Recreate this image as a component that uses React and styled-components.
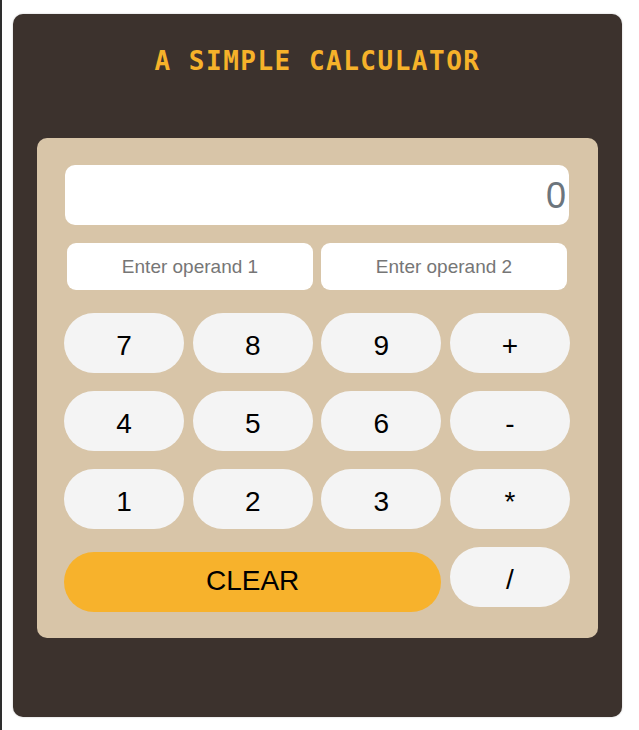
import React from 'react'
import styled, {createGlobalStyle} from 'styled-components'

const GlobalStyle = createGlobalStyle`
  html, body {
    margin: 0;
    padding: 0;
    background: #ffffff;
  }
  body {
    font-family: "Liberation Sans", Arial, sans-serif;
  }
`

const Page = styled.div`
  min-height: 730px;
  box-sizing: border-box;
  border-left: 2px solid #2e2e2e;
  padding: 14px 17px 13px 11px;
`

const Card = styled.div`
  background: #3c322d;
  border-radius: 10px;
  box-shadow: 0 0 2px rgba(0, 0, 0, 0.25);
  padding: 0 24px 79px;
`

const Title = styled.h1`
  margin: 0;
  padding: 32px 0 62px;
  font-family: "DejaVu Sans Mono", monospace;
  font-weight: bold;
  font-size: 26px;
  line-height: 30px;
  letter-spacing: 1.5px;
  color: #f6b22a;
  text-align: center;
`

const Panel = styled.div`
  background: #d8c5a8;
  border-radius: 10px;
  padding: 27px 28px 26px 27px;
`

const Display = styled.div`
  margin: 0 1px;
  height: 60px;
  box-sizing: border-box;
  padding: 2px 3px 0;
  background: #ffffff;
  border-radius: 10px;
  font-size: 36px;
  line-height: 58px;
  color: #6c757d;
  text-align: right;
`

const Operands = styled.div`
  display: grid;
  grid-template-columns: 1fr 1fr;
  column-gap: 8px;
  margin: 18px 3px 23px;
`

const Operand = styled.input`
  height: 47px;
  box-sizing: border-box;
  border: none;
  border-radius: 9px;
  background: #ffffff;
  font-family: "Liberation Sans", Arial, sans-serif;
  font-size: 19px;
  text-align: center;
  outline: none;
  width: 100%;
  &::placeholder {
    color: #767676;
  }
`

const Keys = styled.div`
  display: grid;
  grid-template-columns: repeat(4, 1fr);
  column-gap: 8.67px;
  row-gap: 18px;
`

const Key = styled.button`
  height: 60px;
  box-sizing: border-box;
  border: none;
  border-radius: 30px;
  background: ${p => (p.$accent ? '#f7b22c' : '#f4f4f4')};
  color: #000000;
  font-family: "Liberation Sans", Arial, sans-serif;
  font-size: 28px;
  padding: ${p => (p.$accent ? '0 0 3px' : '6px 0 0')};
  cursor: pointer;
  grid-column: ${p => (p.$span ? `span ${p.$span}` : 'auto')};
  margin-top: ${p => (p.$accent ? '5px' : '0')};
  align-self: start;
`

const rows = [
  ['7', '8', '9', '+'],
  ['4', '5', '6', '-'],
  ['1', '2', '3', '*'],
]

export default function App() {
  return (
    <>
      <GlobalStyle />
      <Page>
        <Card>
          <Title>A SIMPLE CALCULATOR</Title>
          <Panel>
            <Display>0</Display>
            <Operands>
              <Operand placeholder="Enter operand 1" />
              <Operand placeholder="Enter operand 2" />
            </Operands>
            <Keys>
              {rows.flat().map(k => (
                <Key key={k}>{k}</Key>
              ))}
              <Key $accent $span={3}>CLEAR</Key>
              <Key>/</Key>
            </Keys>
          </Panel>
        </Card>
      </Page>
    </>
  )
}
